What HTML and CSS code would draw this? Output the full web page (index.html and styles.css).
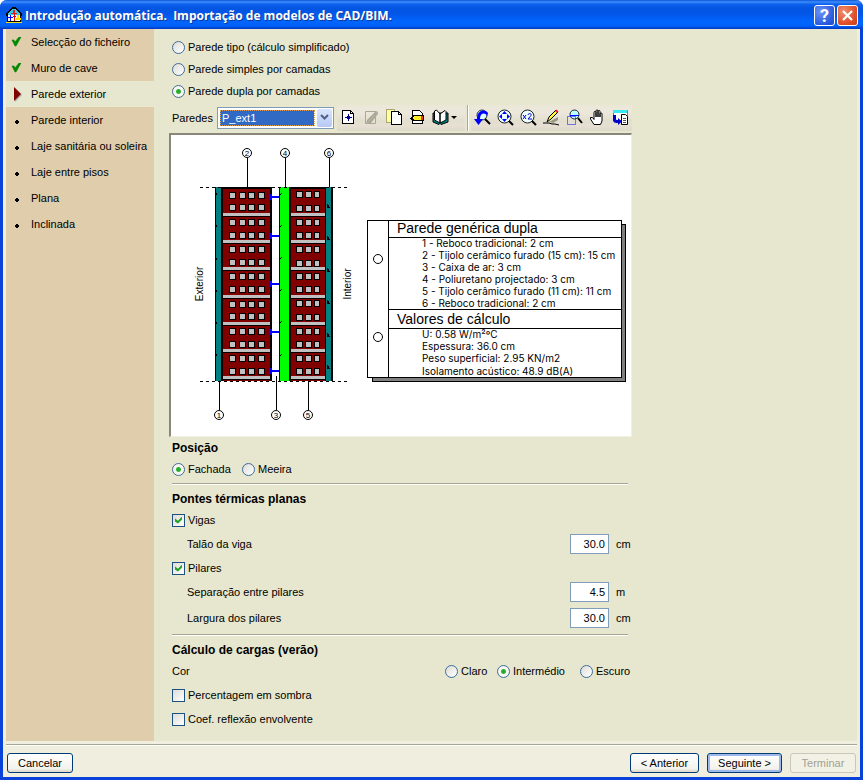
FILE: index.html
```html
<!DOCTYPE html>
<html lang="pt">
<head>
<meta charset="utf-8">
<title>Introdução automática. Importação de modelos de CAD/BIM.</title>
<link rel="stylesheet" href="styles.css">
</head>
<body>
<div class="window">
  <header class="titlebar">
    <svg class="app-icon" width="18" height="18" viewBox="0 0 18 18" shape-rendering="crispEdges">
      <path d="M8 0h2l7 6v3h-1v6H2V9H1V6z" fill="#000"/>
      <path d="M8 2h2l5 4v2H3V6z" fill="#38c8e8"/>
      <path d="M3 8h12v6H3z" fill="#fff"/>
      <path d="M8 3h2v3h2v1H6V6h2z" fill="#d22"/>
      <path d="M5 8h1v2h2v1H6v3H5v-3H3v-1h2z" fill="#00f"/>
      <path d="M9 7h1v2h1v1h-1v4H9v-4H8V9h1z" fill="#e00"/>
      <path d="M12 8h2v3h2v2h-5v-2h1z" fill="#fd0"/>
      <path d="M1 15h16v1H1z" fill="#e8e020"/>
    </svg>
    <h1>Introdução automática.&nbsp; Importação de modelos de CAD/BIM.</h1>
    <button class="caption help" type="button" aria-label="Ajuda">?</button>
    <button class="caption close" type="button" aria-label="Fechar">
      <svg width="13" height="13" viewBox="0 0 13 13"><path d="M2 2l9 9M11 2l-9 9" stroke="#fff" stroke-width="2.2"/></svg>
    </button>
  </header>

  <main class="body">
    <nav class="steps">
      <a href="#" class="step"><svg width="11" height="11" viewBox="0 0 11 11"><path d="M1 3h2l1 2 4-5h2L5 9H4z" fill="#080" stroke="#080" stroke-width=".6"/></svg>Selecção do ficheiro</a>
      <a href="#" class="step"><svg width="11" height="11" viewBox="0 0 11 11"><path d="M1 3h2l1 2 4-5h2L5 9H4z" fill="#080" stroke="#080" stroke-width=".6"/></svg>Muro de cave</a>
      <a href="#" class="step current"><svg width="11" height="15" viewBox="0 0 11 15"><path d="M4 1l7 7-7 7z" fill="#aaa"/><path d="M3 0l7 7-7 7z" fill="#800000"/></svg>Parede exterior</a>
      <a href="#" class="step"><svg width="11" height="11" viewBox="0 0 11 11" shape-rendering="crispEdges"><rect x="4" y="6" width="4" height="2"/><rect x="5" y="5" width="2" height="4"/></svg>Parede interior</a>
      <a href="#" class="step"><svg width="11" height="11" viewBox="0 0 11 11" shape-rendering="crispEdges"><rect x="4" y="6" width="4" height="2"/><rect x="5" y="5" width="2" height="4"/></svg>Laje sanitária ou soleira</a>
      <a href="#" class="step"><svg width="11" height="11" viewBox="0 0 11 11" shape-rendering="crispEdges"><rect x="4" y="6" width="4" height="2"/><rect x="5" y="5" width="2" height="4"/></svg>Laje entre pisos</a>
      <a href="#" class="step"><svg width="11" height="11" viewBox="0 0 11 11" shape-rendering="crispEdges"><rect x="4" y="6" width="4" height="2"/><rect x="5" y="5" width="2" height="4"/></svg>Plana</a>
      <a href="#" class="step"><svg width="11" height="11" viewBox="0 0 11 11" shape-rendering="crispEdges"><rect x="4" y="6" width="4" height="2"/><rect x="5" y="5" width="2" height="4"/></svg>Inclinada</a>
    </nav>

    <form class="content">
      <div class="types">
        <label class="option"><input type="radio" name="tipo">Parede tipo (cálculo simplificado)</label>
        <label class="option"><input type="radio" name="tipo">Parede simples por camadas</label>
        <label class="option"><input type="radio" name="tipo" checked>Parede dupla por camadas</label>
      </div>

      <div class="picker">
        <label class="picker-label" for="paredes">Paredes</label>
        <div class="combo">
          <select id="paredes"><option>P_ext1</option></select>
          <span class="combo-arrow"><svg width="9" height="7" viewBox="0 0 9 7"><path d="M1 1l3.500 3.500L8 1" fill="none" stroke="#4d6185" stroke-width="2"/></svg></span>
        </div>
        <div class="toolbar edit">
          <button type="button" class="tool" aria-label="Novo"><svg width="17" height="17" viewBox="0 0 17 17" shape-rendering="crispEdges"><path d="M2.500 1.500h8l3 3v10h-11z" fill="#fff" stroke="#000"/><path d="M10.500 1.500v3h3" fill="none" stroke="#000"/><rect x="5" y="8" width="7" height="1" fill="#000090"/><rect x="8" y="5" width="1" height="7" fill="#000090"/><rect x="7" y="7" width="3" height="3" fill="#000090"/></svg></button>
          <button type="button" class="tool" aria-label="Editar" disabled><svg width="17" height="17" viewBox="0 0 17 17"><path d="M2.500 2.500h10v12h-10z" fill="none" stroke="#a9a895"/><path d="M3 15l1-4 9-9 2 1-8 8z" fill="#a9a895"/><path d="M7 15l8-10v-2L3 15z" fill="#a9a895"/></svg></button>
          <button type="button" class="tool" aria-label="Copiar"><svg width="17" height="17" viewBox="0 0 17 17" shape-rendering="crispEdges"><path d="M.5 .5h8v13h-8z" fill="#ffffa0" stroke="#aaa870"/><path d="M5.500 2.500h7l3 3v10h-10z" fill="#fff" stroke="#000"/><path d="M12.500 2.500v3h3" fill="none" stroke="#000"/></svg></button>
          <button type="button" class="tool" aria-label="Apagar"><svg width="17" height="17" viewBox="0 0 17 17" shape-rendering="crispEdges"><path d="M3.500 1.500h7l3 3v10h-10z" fill="#fff" stroke="#000"/><path d="M1 9l4-3h10v5l-1 1H5L1 10z" fill="#000"/><path d="M6 7h6v4H6L3 9z" fill="#ffef20"/><path d="M12 7h2v4h-2z" fill="#e33"/></svg></button>
          <button type="button" class="tool wide" aria-label="Biblioteca"><svg width="30" height="17" viewBox="0 0 30 17"><path d="M1 4v9l6 2.500 1-1 1 1 7-2.500V4z" fill="#008080" stroke="#000"/><path d="M2.500 2l2-1 3.500 4v9l-5.500-3zM8 14V5l5-3.500 1 1V11z" fill="#fff" stroke="#000"/><path d="M19 7h6l-3 3z" fill="#000"/></svg></button>
        </div>
        <span class="tool-sep"></span>
        <div class="toolbar">
          <button type="button" class="tool" aria-label="Vista anterior"><svg width="17" height="17" viewBox="0 0 17 17"><circle cx="8" cy="6" r="5" fill="#dff" stroke="#333"/><path d="M11 10l5 5" stroke="#000" stroke-width="2"/><path d="M14 4C12 0 3 0 3 10H0l4.500 6L9 10H6C6 4 11 3 13 7z" fill="#00f"/></svg></button>
          <button type="button" class="tool" aria-label="Enquadrar"><svg width="17" height="17" viewBox="0 0 17 17"><circle cx="7.500" cy="7.500" r="6.500" fill="#eff" stroke="#222"/><path d="M12 12l4 4" stroke="#000" stroke-width="2"/><path d="M7.500 2L10 5H5zM7.500 13L10 10H5zM2 7.500L5 5v5zM13 7.500L10 5v5z" fill="#00f"/></svg></button>
          <button type="button" class="tool" aria-label="Ampliar x2"><svg width="17" height="17" viewBox="0 0 17 17"><circle cx="7.500" cy="7.500" r="6.500" fill="#eff" stroke="#222"/><path d="M12 12l4 4" stroke="#000" stroke-width="2"/><path d="M3 6l3 4M6 6l-3 4M8 6c0-2 4-2 3 .5L8 10h4" fill="none" stroke="#00c"/></svg></button>
          <button type="button" class="tool" aria-label="Redesenhar"><svg width="17" height="17" viewBox="0 0 17 17"><path d="M6 13l9-5v3l-5 3z" fill="#999780"/><path d="M0 14h6l3 1h3l4 1" fill="none" stroke="#000"/><path d="M4 13l2-5 7-7 2 2-7 7z" fill="#ff3" stroke="#000"/><path d="M12 2l1.500-1.500 2 2L14 4z" fill="#e22"/></svg></button>
          <button type="button" class="tool" aria-label="Ampliar janela"><svg width="17" height="17" viewBox="0 0 17 17"><circle cx="8.500" cy="5.500" r="4.500" fill="#bff" stroke="#222"/><path d="M12 9l4 5" stroke="#000" stroke-width="2"/><path d="M1.500 7.500h8v8h-8z" fill="none" stroke="#00f" stroke-dasharray="1 1"/><path d="M4 6.500h9" stroke="#00f"/></svg></button>
          <button type="button" class="tool" aria-label="Mover"><svg width="17" height="17" viewBox="0 0 17 17"><path d="M5 15.500L1.500 10V8.500h2l1.500 2V3.500C5 2 7 2 7 3.500V8 2c0-1.500 2-1.500 2 0v6-5.500c0-1.500 2-1.500 2 0V8 5c0-1.500 2-1.500 2 0v7l-1.500 3.500z" fill="#fff" stroke="#000"/></svg></button>
          <button type="button" class="tool" aria-label="Imprimir vista"><svg width="17" height="17" viewBox="0 0 17 17"><path d="M1.500 1.500h14v10h-14z" fill="#fff" stroke="#778"/><path d="M1 1h14v3H1z" fill="#38e8f0"/><path d="M1 6h3v4c0 1 1 1 2 1V9l4 3.500L6 16v-2c-4 0-5-1-5-4z" fill="#00c"/><path d="M9.500 5.500h4l2 2v8h-6z" fill="#fff" stroke="#000"/><path d="M11 9.500h3M11 11.500h3M11 13.500h3" stroke="#555"/></svg></button>
        </div>
      </div>

      <div class="preview">
        <svg class="drawing" viewBox="171 135 460 301" role="img" aria-label="Corte da parede dupla">
          <defs>
            <g id="wl"><path d="M229 0h7v7h-7zM239 0h7v7h-7zM248 0h7v7h-7zM258 0h7v7h-7z" fill="#000"/><path d="M230 1h5v5h-5zM240 1h5v5h-5zM249 1h5v5h-5zM259 1h5v5h-5z" fill="#c0c0c0"/></g>
            <g id="wr"><path d="M296 0h7v7h-7zM305 0h7v7h-7zM314 0h6v7h-6z" fill="#000"/><path d="M297 1h5v5h-5zM306 1h5v5h-5zM315 1h4v5h-4z" fill="#c0c0c0"/></g>
            <g id="band"><path d="M223 0h47v3h-47zM291 0h34v3h-34z" fill="#c0c0c0"/><path d="M223 3h47v1h-47zM291 3h34v1h-34z" fill="#000"/></g>
            <path id="tie" d="M270 0h2v2h7v2h-7v2h-2z" fill="#00f"/>
          </defs>
          <g shape-rendering="crispEdges">
            <path d="M215 187h57v194h-57zM279 187h54v194h-54z" fill="#000"/>
            <path d="M216 187h5v194h-5zM326 187h5v194h-5z" fill="#008080"/>
            <path d="M223 189h47v192h-47zM291 189h34v192h-34z" fill="#800000"/>
            <path d="M280 187h9v194h-9z" fill="#0f0"/>
            <use href="#band" y="213"/><use href="#band" y="240"/><use href="#band" y="267"/><use href="#band" y="295"/><use href="#band" y="322"/><use href="#band" y="349"/><use href="#band" y="376"/>
            <use href="#wl" y="192"/><use href="#wl" y="204"/><use href="#wl" y="219"/><use href="#wl" y="232"/><use href="#wl" y="246"/><use href="#wl" y="259"/><use href="#wl" y="273"/><use href="#wl" y="286"/><use href="#wl" y="301"/><use href="#wl" y="313"/><use href="#wl" y="328"/><use href="#wl" y="341"/><use href="#wl" y="355"/><use href="#wl" y="368"/>
            <use href="#wr" y="191"/><use href="#wr" y="205"/><use href="#wr" y="219"/><use href="#wr" y="232"/><use href="#wr" y="246"/><use href="#wr" y="260"/><use href="#wr" y="273"/><use href="#wr" y="286"/><use href="#wr" y="300"/><use href="#wr" y="314"/><use href="#wr" y="328"/><use href="#wr" y="341"/><use href="#wr" y="355"/><use href="#wr" y="368"/>
            <use href="#tie" y="194"/><use href="#tie" y="233"/><use href="#tie" y="281"/><use href="#tie" y="329"/><use href="#tie" y="368"/>
            <path d="M216 193h1v2h-1zM216 225h1v2h-1zM216 258h1v2h-1zM216 290h1v2h-1zM216 322h1v2h-1zM216 354h1v2h-1z" fill="#000"/>
            <path d="M280 195l2-2M280 227l2-2M280 259l2-2M280 291l2-2M280 323l2-2M280 356l2-2M327 207v-3l2 3zM327 239v-3l2 3zM327 271v-3l2 3zM327 303v-3l2 3zM327 336v-3l2 3zM327 368v-3l2 3z" fill="none" stroke="#000"/>
            <path d="M200 187.500h147M200 381.500h147" stroke="#000" stroke-dasharray="3 3"/>
            <path d="M247.500 158v29M285.500 158v29M329.500 158v29M219.500 381v29M276.500 376v34M308.500 381v29" stroke="#000"/>
          </g>
          <g fill="#fff" stroke="#000"><circle cx="247" cy="153" r="4.500"/><circle cx="285" cy="153" r="4.500"/><circle cx="329" cy="153" r="4.500"/><circle cx="219" cy="415" r="4.500"/><circle cx="276" cy="415" r="4.500"/><circle cx="308" cy="415" r="4.500"/></g>
          <g class="mark"><text x="247" y="156">2</text><text x="285" y="156">4</text><text x="329" y="156">6</text><text x="219" y="418">1</text><text x="276" y="418">3</text><text x="308" y="418">5</text></g>
          <g class="side"><text transform="translate(203 284) rotate(-90)">Exterior</text><text transform="translate(351 284) rotate(-90)">Interior</text></g>
          <g shape-rendering="crispEdges" stroke="#000">
            <path d="M372.500 224.500h253v157h-253z" fill="#808080"/>
            <path d="M367.500 220.500h254v157h-254z" fill="#fff"/>
            <path d="M388.500 220v158M388 237.500h233M388 309.500h233M388 328.500h233" fill="none"/>
          </g>
          <g fill="#fff" stroke="#000"><circle cx="378" cy="259" r="4.500"/><circle cx="378" cy="337" r="4.500"/></g>
          <g class="legend-title"><text x="397" y="233">Parede genérica dupla</text><text x="397" y="324">Valores de cálculo</text></g>
          <g class="legend">
            <text x="422" y="247">1 - Reboco tradicional: 2 cm</text>
            <text x="422" y="259">2 - Tijolo cerâmico furado (15 cm): 15 cm</text>
            <text x="422" y="271">3 - Caixa de ar: 3 cm</text>
            <text x="422" y="283">4 - Poliuretano projectado: 3 cm</text>
            <text x="422" y="295">5 - Tijolo cerâmico furado (11 cm): 11 cm</text>
            <text x="422" y="307">6 - Reboco tradicional: 2 cm</text>
            <text x="422" y="338">U: 0.58 W/m²ºC</text>
            <text x="422" y="350">Espessura: 36.0 cm</text>
            <text x="422" y="362">Peso superficial: 2.95 KN/m2</text>
            <text x="422" y="375">Isolamento acústico: 48.9 dB(A)</text>
          </g>
        </svg>
      </div>

      <section class="group">
        <h2>Posição</h2>
        <div class="row position">
          <label class="option"><input type="radio" name="pos" checked>Fachada</label>
          <label class="option"><input type="radio" name="pos">Meeira</label>
        </div>
      </section>

      <section class="group ruled">
        <h2>Pontes térmicas planas</h2>
        <div class="row"><label class="option"><input type="checkbox" checked>Vigas</label></div>
        <div class="row sub"><label for="talao">Talão da viga</label><input id="talao" type="text" value="30.0"><span class="unit">cm</span></div>
        <div class="row"><label class="option"><input type="checkbox" checked>Pilares</label></div>
        <div class="row sub"><label for="sep">Separação entre pilares</label><input id="sep" type="text" value="4.5"><span class="unit">m</span></div>
        <div class="row sub tall"><label for="larg">Largura dos pilares</label><input id="larg" type="text" value="30.0"><span class="unit">cm</span></div>
      </section>

      <section class="group ruled">
        <h2>Cálculo de cargas (verão)</h2>
        <div class="row colour">
          <span>Cor</span>
          <label class="option"><input type="radio" name="cor">Claro</label>
          <label class="option"><input type="radio" name="cor" checked>Intermédio</label>
          <label class="option"><input type="radio" name="cor">Escuro</label>
        </div>
        <div class="row"><label class="option"><input type="checkbox">Percentagem em sombra</label></div>
        <div class="row"><label class="option"><input type="checkbox">Coef. reflexão envolvente</label></div>
      </section>
    </form>
  </main>

  <footer class="footer">
    <button type="button" class="btn cancel">Cancelar</button>
    <button type="button" class="btn">&lt; Anterior</button>
    <button type="button" class="btn default">Seguinte &gt;</button>
    <button type="button" class="btn" disabled>Terminar</button>
  </footer>
</div>
</body>
</html>
```

FILE: styles.css
```css
* { box-sizing: border-box; }

body {
  margin: 0;
  background: #fff;
  font: 11px/16px "Liberation Sans", Arial, sans-serif;
  color: #000;
}

.window {
  min-height: 100vh;
  display: flex;
  flex-direction: column;
  border: solid #0842d8;
  border-width: 0 3px 3px;
  border-radius: 7px 7px 0 0;
  background: #efeedf;
}

.titlebar {
  height: 29px;
  margin: 0 -3px;
  padding: 2px 5px 0;
  display: flex;
  align-items: center;
  gap: 2px;
  border-radius: 7px 7px 0 0;
  background: linear-gradient(#0a55dc 0, #3f8ffb 2px, #0f62ee 4px, #0355e2 8px, #0357e8 14px, #0065ff 22px, #0060f8 26px, #0038c0 29px);
}

.titlebar h1 {
  flex: 1;
  margin: 0;
  color: #fff;
  font: bold 12px/16px "Open Sans", sans-serif;
  text-shadow: 1px 1px 0 #0b3a9c;
}

.caption {
  width: 21px;
  height: 21px;
  padding: 0;
  display: grid;
  place-items: center;
  border: 1px solid #fff;
  border-radius: 3px;
  color: #fff;
  font: bold 18px/18px Roboto, sans-serif;
}

.help { background: radial-gradient(circle at 30% 30%, #6b93f5, #2a5ade 70%, #1f4ecf); }
.close { background: radial-gradient(circle at 30% 30%, #f09070, #e0522c 60%, #c63c14); }

.body {
  flex: 1;
  display: flex;
  margin: 0 3px;
  background: #e6e7ce;
}

.steps {
  width: 148px;
  background: #dfcdac;
}

.step {
  height: 26px;
  padding-left: 5px;
  display: flex;
  align-items: center;
  gap: 9px;
  color: #000;
  text-decoration: none;
}

.current { background: #e6e7ce; }

.content {
  width: 478px;
  padding: 7px 0 10px 15px;
}

.types, .group { margin: 0 4px 0 3px; }

.option {
  display: flex;
  align-items: center;
  gap: 3px;
}

.types .option { height: 22px; }

input[type="radio"], input[type="checkbox"] {
  appearance: none;
  flex: none;
  width: 13px;
  height: 13px;
  margin: 0;
  border: 1px solid #1c5180;
  background: linear-gradient(135deg, #dcdcd7, #fff);
}

input[type="radio"] {
  border-color: #3f6c9c;
  border-radius: 50%;
}

input[type="radio"]:checked {
  background: radial-gradient(circle, #21a121 0, #35b535 2px, #f6f6f2 3px);
}

input[type="checkbox"]:checked {
  display: grid;
  place-items: center;
}

input[type="checkbox"]:checked::before {
  content: "";
  width: 7px;
  height: 7px;
  background: #21a121;
  clip-path: polygon(0 29%, 43% 60%, 100% 0, 100% 43%, 43% 100%, 0 71%);
}

.picker {
  height: 31px;
  padding-left: 3px;
  display: flex;
  align-items: center;
}

.picker-label { width: 45px; }

.combo {
  position: relative;
  flex: 1;
  margin-right: 3px;
}

.combo select {
  appearance: none;
  width: 100%;
  height: 22px;
  padding: 0 4px;
  display: block;
  border: 1px solid #7f9db9;
  border-radius: 0;
  background: linear-gradient(#316ac5, #316ac5) 2px 2px / calc(100% - 21px) calc(100% - 4px) no-repeat #fff;
  color: #fff;
  font: inherit;
}

.combo-arrow {
  position: absolute;
  top: 2px;
  right: 2px;
  bottom: 2px;
  width: 15px;
  display: grid;
  place-items: center;
  border-radius: 2px;
  background: linear-gradient(#dbe5fd, #b5c9f5);
  pointer-events: none;
}

.combo::after {
  content: "";
  position: absolute;
  inset: 3px 19px 3px 3px;
  border: 1px dotted #e0a050;
  pointer-events: none;
}

.toolbar {
  height: 26px;
  display: flex;
  background: linear-gradient(#ebe8d8, #ece7db 30%, #e2dfcf 60%, #e6dfd2 80%, #dddaca);
}

.tool {
  width: 23px;
  padding: 0;
  display: grid;
  place-items: center;
  border: 0;
  background: none;
}

.wide { width: 36px; }

.tool-sep {
  width: 2px;
  height: 26px;
  margin: 0 2px;
  border-left: 1px solid #aca899;
  background: #fff;
}

.preview {
  border: solid;
  border-width: 2px 1px 1px 2px;
  border-color: #8a877a #f1efe2 #f1efe2 #8a877a;
  background: #fff;
}

.drawing {
  display: block;
  width: 100%;
  font-family: "Liberation Sans", sans-serif;
}

.mark { font-size: 8px; text-anchor: middle; }
.side { font-size: 10px; text-anchor: middle; }
.legend-title { font-size: 14px; }
.legend { font-family: Inter, sans-serif; font-size: 10px; }

h2 {
  height: 20px;
  margin: 0;
  font: bold 12px/22px "Liberation Sans", sans-serif;
}

.ruled {
  margin-top: 2px;
  padding-top: 4px;
  border-top: 1px solid #a5a594;
  box-shadow: inset 0 1px #fff;
}

.row {
  height: 24px;
  display: flex;
  align-items: center;
}

.tall { height: 28px; }
.position .option { width: 70px; }
.sub { padding-left: 15px; }
.sub label { flex: 1; }

.sub input {
  width: 39px;
  height: 20px;
  padding: 0 3px;
  border: 1px solid #7f9db9;
  background: #fff;
  font: inherit;
  text-align: right;
}

.unit {
  width: 12px;
  margin-left: 7px;
}

.colour {
  display: grid;
  grid-template-columns: 1fr 52px 83px 48px;
}

.footer {
  margin: 3px 3px 0;
  padding: 8px 1px 4px;
  display: flex;
  gap: 8px;
  border-top: 1px solid #a5a594;
  box-shadow: inset 0 1px #fff;
}

.btn {
  min-width: 66px;
  height: 20px;
  padding: 0 10px;
  border: 1px solid #003c74;
  border-radius: 3px;
  background: linear-gradient(#fff, #f3f2ec 80%, #dcd8cc);
  color: #000;
  font: inherit;
}

.cancel { margin-right: auto; }
.default { box-shadow: inset 0 0 0 2px #9db9eb; }

.btn:disabled {
  border-color: #c9c7ba;
  background: #f2f1e6;
  color: #a1a192;
}
```
